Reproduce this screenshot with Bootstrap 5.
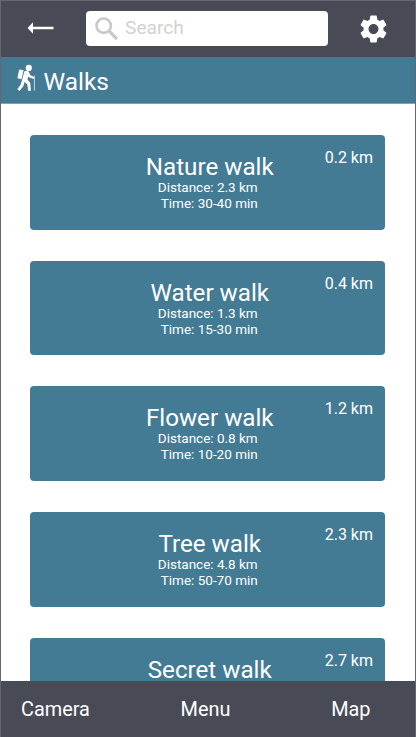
<!DOCTYPE html>
<html lang="en">
<head>
<meta charset="utf-8">
<meta name="viewport" content="width=device-width, initial-scale=1">
<title>Walks</title>
<link href="https://cdn.jsdelivr.net/npm/bootstrap@5.3.0/dist/css/bootstrap.min.css" rel="stylesheet">
<style>
  body { font-family: Roboto, "Liberation Sans", sans-serif; color: #fff; background: #fff; }
  .phone { height: 737px; border: 1px solid #646773; border-bottom: 0; }
  .topbar { height: 56px; background: #484b56; padding: 0 28px 2px 26px; }
  .search-box { width: 242px; height: 35px; border-radius: 4px; margin-left: 32px; padding-left: 9px; }
  .search-box input { font-size: 19.2px; line-height: 1; color: #555; margin: 0 0 1px 7px; }
  .search-box input::placeholder { color: #d2d2d2; opacity: 1; }
  .gear { margin-top: 2px; }
  .title-bar { height: 47px; background: #437b95; border-bottom: 1px solid #7ba3b5; padding-left: 16px; }
  .title-bar svg { margin-bottom: 5px; }
  .title-bar h1 { font-size: 24.4px; line-height: 30px; font-weight: 400; margin-left: 6.500px; padding-top: 3px; }
  .walks { padding: 31px 30.5px 0 29px; gap: 31.2px; }
  .walk { height: 94.5px; background: #437b95; border-radius: 4px; color: #fff; padding-top: 20px; }
  .walk h2 { font-size: 24.2px; line-height: 24px; font-weight: 400; padding-left: 5px; }
  .walk p { font-size: 13.5px; line-height: 16px; padding-left: 1px; }
  .walk p + p { padding-left: 4px; }
  .away { top: 11px; right: 11.5px; font-size: 16px; line-height: 24px; }
  .bottombar { height: 56px; background: #484b56; padding: 1px 44.5px 0 20px; }
  .bottombar a { font-size: 19.900px; line-height: 24px; }
  .bottombar .menu-link { margin-right: 10px; }
</style>
</head>
<body>
<div class="phone d-flex flex-column overflow-hidden">
  <header class="topbar d-flex align-items-center flex-shrink-0">
    <svg width="27" height="14" viewBox="0 0 27 14" aria-label="Back"><path d="M26.500 5.800H6V1.300L.6 7 6 12.700V8.200H26.500Z" fill="#fffef8"/></svg>
    <div class="search-box bg-white d-flex align-items-center">
      <svg class="flex-shrink-0" width="23" height="23" viewBox="0 0 22 22" fill="none" stroke="#c9c9c9"><circle cx="8.300" cy="8.300" r="6.900" stroke-width="2.500"/><path d="M13.300 13.300 21 21" stroke-width="3.200"/></svg>
      <input class="form-control border-0 shadow-none bg-transparent p-0" type="text" placeholder="Search" aria-label="Search">
    </div>
    <svg class="gear ms-auto" width="27" height="28" viewBox="2.200 2 19.600 20" preserveAspectRatio="none" fill="#fff" aria-label="Settings"><path d="M19.140 12.940c.040-.300.060-.610.060-.940 0-.320-.020-.640-.070-.940l2.030-1.580c.180-.140.230-.410.120-.610l-1.920-3.320c-.120-.220-.370-.290-.590-.220l-2.390.960c-.500-.380-1.030-.700-1.620-.940L14.400 2.810c-.040-.240-.240-.410-.480-.410h-3.840c-.240 0-.430.170-.470.410L9.250 5.350C8.660 5.590 8.120 5.920 7.630 6.290L5.240 5.330c-.220-.080-.470 0-.590.220L2.740 8.870c-.120.210-.080.470.120.610l2.030 1.580C4.840 11.360 4.800 11.690 4.800 12s.020.640.070.940l-2.030 1.580c-.180.140-.230.410-.120.610l1.920 3.320c.120.220.370.290.590.220l2.390-.960c.500.380 1.030.700 1.620.940l.360 2.540c.050.240.240.410.480.410h3.840c.240 0 .440-.170.470-.410l.360-2.540c.590-.240 1.130-.560 1.620-.940l2.390.960c.220.080.470 0 .590-.220l1.920-3.320c.120-.220.070-.470-.120-.610L19.140 12.940zM12 15.600c-1.980 0-3.600-1.620-3.600-3.600s1.620-3.600 3.600-3.600 3.600 1.620 3.600 3.600-1.620 3.600-3.600 3.600z"/></svg>
  </header>

  <div class="title-bar d-flex align-items-center flex-shrink-0">
    <svg width="20" height="28" viewBox="0 0 20 28" fill="#fff"><circle cx="11.800" cy="3.900" r="3.100"/><path d="M3 5.500 6.600 6.300 4.500 15.200 1.200 14.500Q.400 14.200.600 13.300L2 6.300Q2.300 5.400 3 5.500Z"/><path d="M7.400 7.300Q9.600 6.200 11.600 7.600L13.400 11.200 17.300 13 16.600 15 12 13.300 11.200 12.500 10.500 15.800 13.200 18.800 13.900 26.700H11.200L10.300 20.300 7.600 17.900 6.300 22.200 2.500 26.900.300 25.200 3.600 20.800 5.300 15Z"/><path d="M17.400 11.500V26.500" stroke="#c9dae1" stroke-width="1"/></svg>
    <h1 class="mb-0">Walks</h1>
  </div>

  <main class="walks bg-white d-flex flex-column flex-grow-1 overflow-hidden">
    <section class="walk position-relative text-center flex-shrink-0">
      <h2 class="mb-0">Nature walk</h2><p class="mb-0">Distance: 2.3 km</p><p class="mb-0">Time: 30-40 min</p>
      <span class="away position-absolute">0.2 km</span>
    </section>
    <section class="walk position-relative text-center flex-shrink-0">
      <h2 class="mb-0">Water walk</h2><p class="mb-0">Distance: 1.3 km</p><p class="mb-0">Time: 15-30 min</p>
      <span class="away position-absolute">0.4 km</span>
    </section>
    <section class="walk position-relative text-center flex-shrink-0">
      <h2 class="mb-0">Flower walk</h2><p class="mb-0">Distance: 0.8 km</p><p class="mb-0">Time: 10-20 min</p>
      <span class="away position-absolute">1.2 km</span>
    </section>
    <section class="walk position-relative text-center flex-shrink-0">
      <h2 class="mb-0">Tree walk</h2><p class="mb-0">Distance: 4.8 km</p><p class="mb-0">Time: 50-70 min</p>
      <span class="away position-absolute">2.3 km</span>
    </section>
    <section class="walk position-relative text-center flex-shrink-0">
      <h2 class="mb-0">Secret walk</h2>
      <span class="away position-absolute">2.7 km</span>
    </section>
  </main>

  <nav class="bottombar d-flex align-items-center justify-content-between flex-shrink-0">
    <a class="text-white text-decoration-none" href="#">Camera</a>
    <a class="menu-link text-white text-decoration-none" href="#">Menu</a>
    <a class="text-white text-decoration-none" href="#">Map</a>
  </nav>
</div>
<script src="https://cdn.jsdelivr.net/npm/bootstrap@5.3.0/dist/js/bootstrap.bundle.min.js"></script>
</body>
</html>
